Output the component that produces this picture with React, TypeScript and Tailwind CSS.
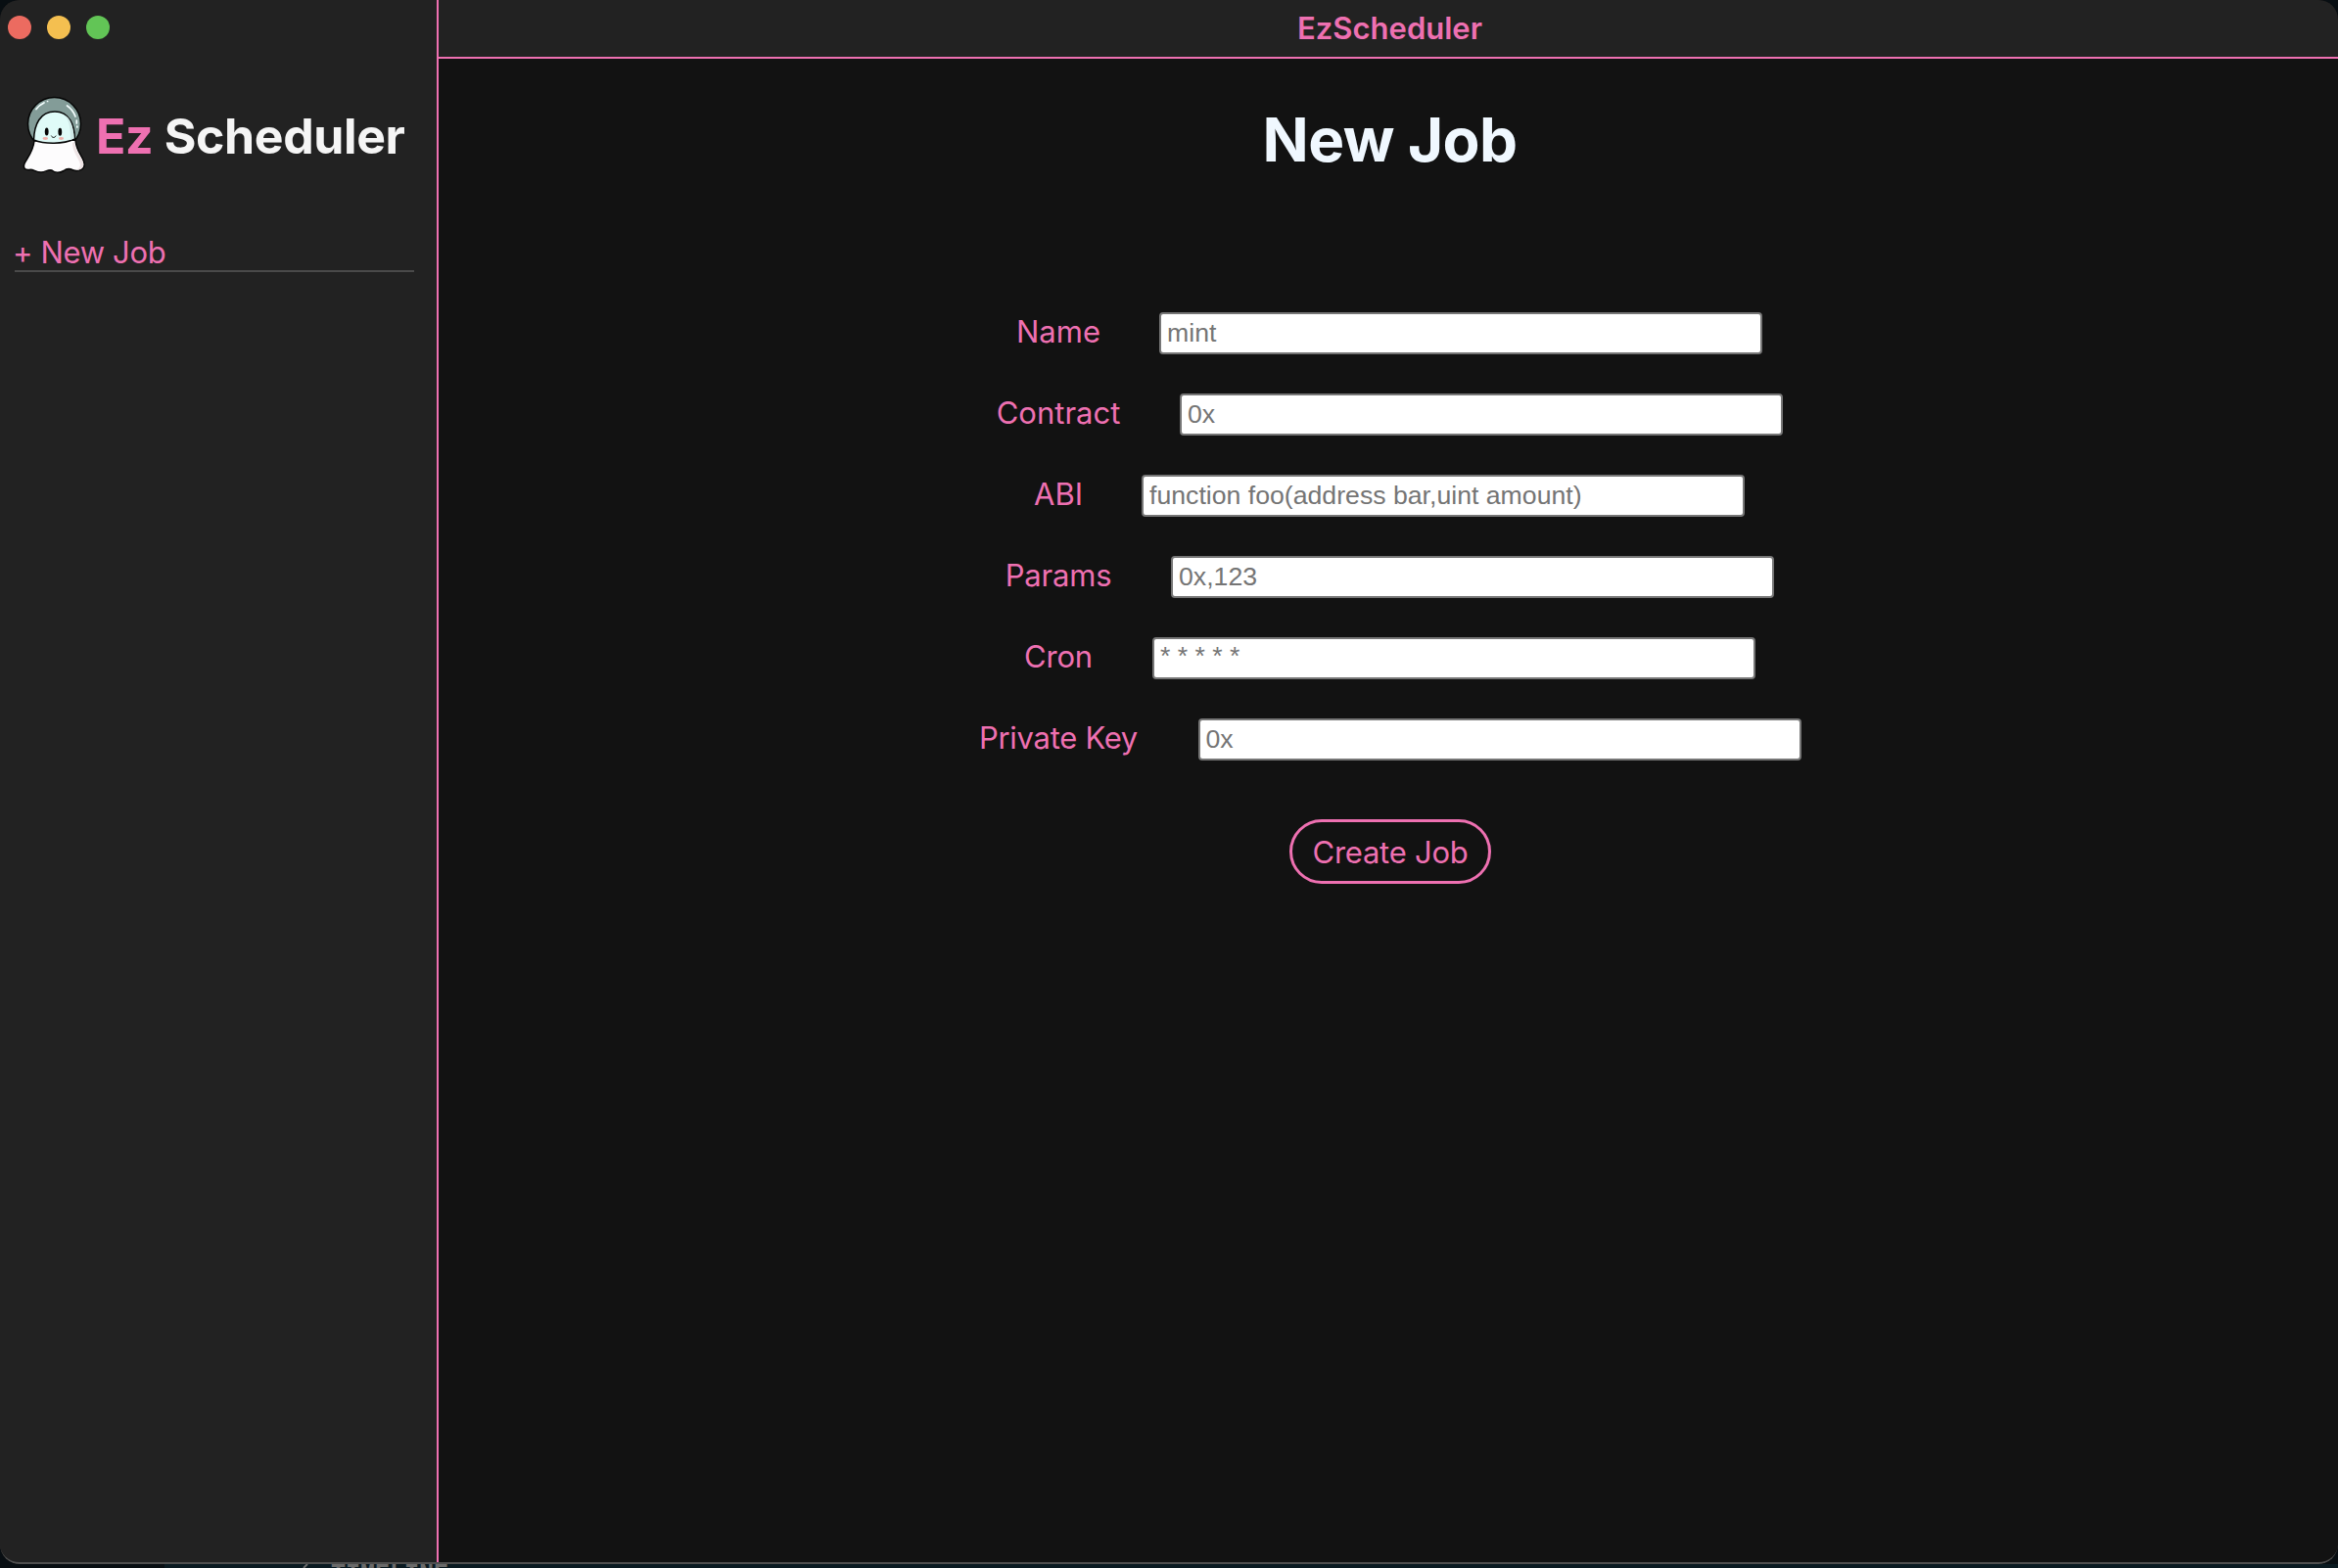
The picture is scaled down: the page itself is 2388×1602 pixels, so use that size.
import React from "react";

const fields = [
  { label: "Name", placeholder: "mint", width: "w-[86px]", pad: "pb-0.5" },
  { label: "Contract", placeholder: "0x", width: "w-[128px]", pad: "pb-0.5" },
  { label: "ABI", placeholder: "function foo(address bar,uint amount)", width: "w-[50px]", pad: "pb-0.5" },
  { label: "Params", placeholder: "0x,123", width: "w-[110px] tracking-[-0.2px]", pad: "pb-0.5" },
  { label: "Cron", placeholder: "* * * * *", width: "w-[72px] tracking-[-0.2px]", pad: "pb-[6px]" },
  { label: "Private Key", placeholder: "0x", width: "w-[165px] tracking-[-0.3px]", pad: "pb-0.5" },
];

function Ghost() {
  return (
    <svg className="h-[82px] w-[66px] shrink-0" viewBox="0 0 66 82" fill="none" strokeLinecap="round" strokeLinejoin="round">
      <circle cx="32.5" cy="28.5" r="27" fill="#839c98" stroke="#050505" strokeWidth="1.5" />
      <path d="M12 46C11 56 6 62 2.500 68C0 73 2 76 7 75.500C11 74.500 13 78 19 78C24 78 26 74.500 30 76C33 79 38 79 42 76.500C45 74 48 74 51 75.500C57 78 64 75 63 69C62 61 55 58 54 45Z" fill="#fdfcfd" stroke="#050505" strokeWidth="1.500" />
      <path d="M51 48C51 58 58 64 59 70C59 73 57 75 55 75.500C60 76 63 73 62 68C60 61 54 57 53 47Z" fill="#eee4e5" />
      <path d="M11.500 45C12 29 18 16 33 16C48 16 53 30 53.500 44C41 49.500 23 49.500 11.500 45Z" fill="#e0fbf8" stroke="#050505" strokeWidth="1.500" />
      <path d="M42 19C48 24 49 34 49 45L52.500 43.500C52 31 49 22 42 19Z" fill="#d0e9e7" />
      <path d="M14 13.500C16 10.500 19 8.500 22 7M25.500 5.500h.1M45.500 10C50 13 52.500 17 54 21M55.300 25v3M55.800 31v1" stroke="#f5ffff" strokeWidth="1.700" />
      <ellipse cx="24.700" cy="36.500" rx="1.900" ry="4" fill="#050505" />
      <ellipse cx="38.300" cy="36.800" rx="1.900" ry="4" fill="#050505" />
      <path d="M29.500 41C30.500 43 33 43 34 41" stroke="#050505" strokeWidth="1" />
      <ellipse cx="23.300" cy="43.500" rx="2.800" ry="1.400" fill="#efb0aa" />
      <ellipse cx="39.500" cy="43.500" rx="2.600" ry="1.400" fill="#efb0aa" />
    </svg>
  );
}

export default function App() {
  return (
    <div className="flex h-[1602px] w-[2388px] flex-col overflow-hidden bg-[#080e12] font-['Inter',sans-serif] text-[31px] text-[#ee70b1]">
      <div className="relative flex h-[1598px] shrink-0 overflow-hidden rounded-[20px] bg-[#121212]">
        <aside className="flex w-[448px] shrink-0 flex-col border-r-2 border-[#ee70b1] bg-[#222222]">
          <div className="flex gap-4 pt-4 pl-2">
            <span className="size-6 rounded-full bg-[#ec6b60]" />
            <span className="size-6 rounded-full bg-[#f4bf50]" />
            <span className="size-6 rounded-full bg-[#62c556]" />
          </div>
          <div className="mt-[58px] flex h-[82px] items-center pl-[23px]">
            <Ghost />
            <h1 className="ml-[9px] whitespace-nowrap text-[50px] leading-[60px] font-bold tracking-[-0.4px] text-[#f5f5f5]">
              <span className="text-[#ee70b1]">Ez</span> Scheduler
            </h1>
          </div>
          <nav className="mt-[58px] mr-[23px] ml-[15px] h-10 border-b-2 border-[#4a4a4a] leading-[40px] tracking-[-0.35px]">
            <span className="-ml-[2px]">+ New Job</span>
          </nav>
        </aside>
        <div className="flex flex-1 flex-col">
          <header className="flex h-[60px] items-center justify-center border-b-2 border-[#ee70b1] bg-[#222222] pl-[3px] font-semibold">
            <span>EzScheduler</span>
          </header>
          <main className="flex flex-col items-center pl-[2px]">
            <h2 className="mt-[43px] pl-[1px] text-[62px] leading-[80px] font-bold tracking-[-0.6px] text-[#f0f8ff]">New Job</h2>
            <form className="mt-[136px] flex flex-col items-center gap-10">
              {fields.map((f) => (
                <label key={f.label} className="flex h-[43px] items-center gap-[60px]">
                  <span className={`${f.width} flex h-[43px] justify-center leading-[40px] whitespace-nowrap`}>{f.label}</span>
                  <input
                    className={`${f.pad} h-[43px] w-[616px] rounded-[4px] border-2 border-[#767676] bg-white pt-0.5 pr-1 pl-[6px] font-['Liberation_Sans',sans-serif] text-[26.667px] text-black placeholder:text-[#757575]`}
                    placeholder={f.placeholder}
                  />
                </label>
              ))}
              <button
                type="button"
                className="mt-5 ml-[2px] h-[66px] w-[206px] rounded-[33px] border-3 border-[#ee70b1] pt-[2px] tracking-[-0.25px] whitespace-nowrap"
              >
                Create Job
              </button>
            </form>
          </main>
        </div>
        <div className="pointer-events-none absolute inset-0 rounded-[20px] border-b-2 border-[#4f4f4f]" />
      </div>
      <div className="flex h-1 overflow-hidden pl-[168px]">
        <div className="flex h-1 w-[2220px] bg-[#0a1a21] pl-[140px] font-['Liberation_Mono',monospace] text-[25px] leading-[22px] font-bold text-[#6a6a6a]">
          <svg className="h-1 w-[30px]" viewBox="0 0 30 4" fill="none" stroke="#6a6a6a" strokeWidth="2">
            <path d="M2 4L6 0" />
          </svg>
          TIMELINE
        </div>
      </div>
    </div>
  );
}
